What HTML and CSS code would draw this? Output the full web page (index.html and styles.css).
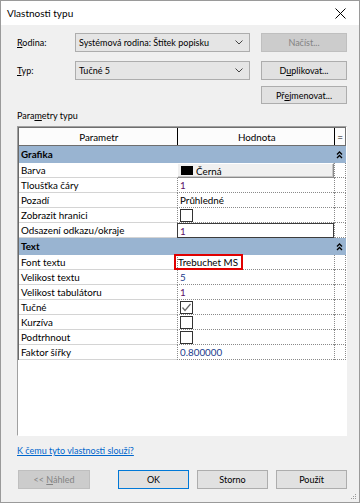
FILE: index.html
```html
<html>

<head>
    <link rel="stylesheet" href="styles.css">
</head>

<body>
    <div class="dialog">
        <div class="titlebar">
            <span>Vlastnosti typu</span>
            <svg class="close" width="11" height="11" viewBox="0 0 11 11"><path d="M0.5 0.5L10.5 10.5M10.5 0.5L0.5 10.5" stroke="#000" stroke-width="1"/></svg>
        </div>
        <div class="content">
            <div class="formRow first">
                <label><u>R</u>odina:</label>
                <div class="combo">Systémová rodina: Štítek popisku
                    <svg class="arrow" width="8" height="5" viewBox="0 0 8 5"><path d="M0.5 0.5L4 4L7.5 0.5" fill="none" stroke="#444"/></svg>
                </div>
                <button class="btn disabled">Načíst...</button>
            </div>
            <div class="formRow second">
                <label><u>T</u>yp:</label>
                <div class="combo">Tučné 5
                    <svg class="arrow" width="8" height="5" viewBox="0 0 8 5"><path d="M0.5 0.5L4 4L7.5 0.5" fill="none" stroke="#444"/></svg>
                </div>
                <button class="btn">D<u>u</u>plikovat...</button>
            </div>
            <div class="formRow third">
                <button class="btn">Př<u>e</u>jmenovat...</button>
            </div>

            <div class="sectionLabel">Para<u>m</u>etry typu</div>
            <div class="grid">
                <div class="gridInner">
                    <div class="prow head">
                        <div class="pname">Parametr</div>
                        <div class="pval">Hodnota</div>
                        <div class="pext">=</div>
                    </div>
                    <div class="prow group">
                        <div class="gname">Grafika</div>
                        <svg class="chev" width="7" height="8" viewBox="0 0 7 8"><path d="M1 3.5L3.5 1L6 3.5M1 7L3.5 4.5L6 7" fill="none" stroke="#000" stroke-width="1.3"/></svg>
                    </div>
                    <div class="prow">
                        <div class="pname">Barva</div>
                        <div class="pval raised"><span class="swatch"></span>Černá</div>
                        <div class="pext"></div>
                    </div>
                    <div class="prow">
                        <div class="pname">Tloušťka čáry</div>
                        <div class="pval num">1</div>
                        <div class="pext"></div>
                    </div>
                    <div class="prow">
                        <div class="pname">Pozadí</div>
                        <div class="pval">Průhledné</div>
                        <div class="pext"></div>
                    </div>
                    <div class="prow">
                        <div class="pname">Zobrazit hranici</div>
                        <div class="pval"><span class="check"></span></div>
                        <div class="pext"></div>
                    </div>
                    <div class="prow">
                        <div class="pname">Odsazení odkazu/okraje</div>
                        <div class="pval edit num">1</div>
                        <div class="pext"></div>
                    </div>
                    <div class="prow group">
                        <div class="gname">Text</div>
                        <svg class="chev" width="7" height="8" viewBox="0 0 7 8"><path d="M1 3.5L3.5 1L6 3.5M1 7L3.5 4.5L6 7" fill="none" stroke="#000" stroke-width="1.3"/></svg>
                    </div>
                    <div class="prow">
                        <div class="pname">Font textu</div>
                        <div class="pval"><span class="marked">Trebuchet MS</span></div>
                        <div class="pext"></div>
                    </div>
                    <div class="prow">
                        <div class="pname">Velikost textu</div>
                        <div class="pval num2">5</div>
                        <div class="pext"></div>
                    </div>
                    <div class="prow">
                        <div class="pname">Velikost tabulátoru</div>
                        <div class="pval num">1</div>
                        <div class="pext"></div>
                    </div>
                    <div class="prow">
                        <div class="pname">Tučné</div>
                        <div class="pval">
                            <span class="check">
                                <svg width="11" height="11" viewBox="0 0 11 11"><path d="M1.5 5.5L4 8.5L9.5 2" fill="none" stroke="#666" stroke-width="1.2"/></svg>
                            </span>
                        </div>
                        <div class="pext"></div>
                    </div>
                    <div class="prow">
                        <div class="pname">Kurzíva</div>
                        <div class="pval"><span class="check"></span></div>
                        <div class="pext"></div>
                    </div>
                    <div class="prow">
                        <div class="pname">Podtrhnout</div>
                        <div class="pval"><span class="check"></span></div>
                        <div class="pext"></div>
                    </div>
                    <div class="prow">
                        <div class="pname">Faktor šířky</div>
                        <div class="pval num2">0.800000</div>
                        <div class="pext"></div>
                    </div>
                </div>
            </div>

            <a class="help" href="#">K čemu tyto vlastnosti slouží?</a>

            <div class="bottomRow">
                <button class="btn wide disabled">&lt;&lt; <u>N</u>áhled</button>
                <button class="btn wide default">OK</button>
                <button class="btn wide">Storno</button>
                <button class="btn wide">Použít</button>
            </div>
            <svg class="grip" width="6" height="6" viewBox="0 0 6 6"><rect x="4" y="0" width="1" height="1" fill="#999"/><rect x="2" y="2" width="1" height="1" fill="#999"/><rect x="4" y="2" width="1" height="1" fill="#999"/><rect x="0" y="4" width="1" height="1" fill="#999"/><rect x="2" y="4" width="1" height="1" fill="#999"/><rect x="4" y="4" width="1" height="1" fill="#999"/></svg>
        </div>
    </div>
</body>

</html>
```
FILE: styles.css
```css
body {
    margin: 0;
    font-family: Lato, "Noto Sans", sans-serif;
    font-size: 9px;
    color: #000;
}

.dialog {
    width: 360px;
    height: 503px;
    box-sizing: border-box;
    border: 1px solid #9a9a9a;
    background: #f0f0f0;
    display: flex;
    flex-direction: column;
}

.titlebar {
    height: 24px;
    background: #fff;
    display: flex;
    align-items: center;
    justify-content: space-between;
    padding: 0 13px 0 6px;
    font-size: 10px;
}

.content {
    flex: 1;
    position: relative;
    padding: 8px 0 0 16px;
}

.formRow {
    display: flex;
    align-items: center;
    height: 19px;
}

.formRow.second {
    margin-top: 9px;
}

.formRow.third {
    margin-top: 6px;
    height: 18px;
    justify-content: flex-start;
    padding-left: 244px;
}

.formRow label {
    width: 58px;
}

u {
    text-decoration: underline;
    text-underline-offset: 1px;
}

.combo {
    width: 175px;
    height: 19px;
    box-sizing: border-box;
    border: 1px solid #adadad;
    background: #e5e5e5;
    padding-left: 3px;
    display: flex;
    align-items: center;
    justify-content: space-between;
    padding-right: 6px;
}

.btn {
    font-family: inherit;
    font-size: 9px;
    width: 86px;
    height: 19px;
    margin-left: 11px;
    box-sizing: border-box;
    border: 1px solid #adadad;
    background: #e1e1e1;
    padding: 0;
    color: #000;
}

.formRow.third .btn {
    margin-left: 0;
    height: 18px;
}

.btn.disabled {
    background: #cccccc;
    border-color: #bfbfbf;
    color: #838383;
}

.btn.default {
    border-color: #0078d7;
}

.sectionLabel {
    margin-top: 5px;
    height: 17px;
    line-height: 14px;
}

.grid {
    width: 330px;
    height: 310px;
    box-sizing: border-box;
    border: 1px solid;
    border-color: #a0a0a0 #ffffff #ffffff #a0a0a0;
    background: #fff;
    font-size: 9.8px;
}

.gridInner {
    width: 327px;
    border-left: 1px solid #696969;
    margin-left: 0;
}

.prow {
    display: flex;
    height: 15px;
    box-sizing: border-box;
    line-height: 14px;
}

.pname {
    width: 157px;
    padding-left: 2px;
    border-bottom: 1px solid #d4d4d4;
    white-space: nowrap;
}

.pval {
    width: 158px;
    border-left: 1px dotted #8a8a8a;
    border-bottom: 1px dotted #8a8a8a;
    box-sizing: border-box;
    display: flex;
    align-items: center;
    padding-left: 2px;
}

.pext {
    width: 10px;
    border-left: 1px dotted #8a8a8a;
    border-right: 1px dotted #8a8a8a;
    border-bottom: 1px dotted #8a8a8a;
}

.prow.head {
    height: 19px;
    line-height: 18px;
    background: #fcfcfc;
    border-bottom: 1px solid #6e6e6e;
    border-top: 1px solid #6e6e6e;
}

.prow.head .pname {
    text-align: center;
    border-bottom: none;
    border-right: 1px solid #000;
}

.prow.head .pval {
    justify-content: center;
    border: none;
}

.prow.head .pext {
    border: none;
    border-left: 1px solid #000;
    border-right: 1px solid #6e6e6e;
    text-align: center;
    font-size: 10px;
}

.prow.group {
    height: 17px;
    line-height: 17px;
    background: #99b4d1;
    font-weight: bold;
    justify-content: space-between;
    align-items: center;
    padding-right: 3px;
}

.gname {
    padding-left: 2px;
}

.pval.raised {
    border: 1px solid;
    border-color: #fff #8a8a8a #8a8a8a #fff;
    background: #f0f0f0;
    box-shadow: inset -1px -1px 0 #c8c8c8;
}

.swatch {
    width: 12px;
    height: 9px;
    background: #000;
    margin-right: 3px;
    margin-left: 1px;
}

.pval.edit {
    border: 1px solid #3c3c3c;
}

.num {
    color: #5a1068;
}

.num2 {
    color: #1a3a8a;
}

.check {
    width: 11px;
    height: 11px;
    border: 1px solid #333;
    background: #fff;
    display: flex;
}

.marked {
    border: 2px solid #e00000;
    margin-left: -6px;
    padding: 0 3px 0 2px;
    line-height: 12px;
}

.help {
    display: block;
    margin-top: 9px;
    color: #0066cc;
    text-decoration: underline;
    width: max-content;
}

.bottomRow {
    display: flex;
    margin-top: 14px;
    padding-left: 1px;
}

.btn.wide {
    width: 71px;
    margin-left: 8px;
}

.btn.wide:first-child {
    margin-left: 0;
    width: 72px;
}

.btn.default {
    margin-left: 28px;
}

.grip {
    position: absolute;
    right: 2px;
    bottom: 2px;
}
```
